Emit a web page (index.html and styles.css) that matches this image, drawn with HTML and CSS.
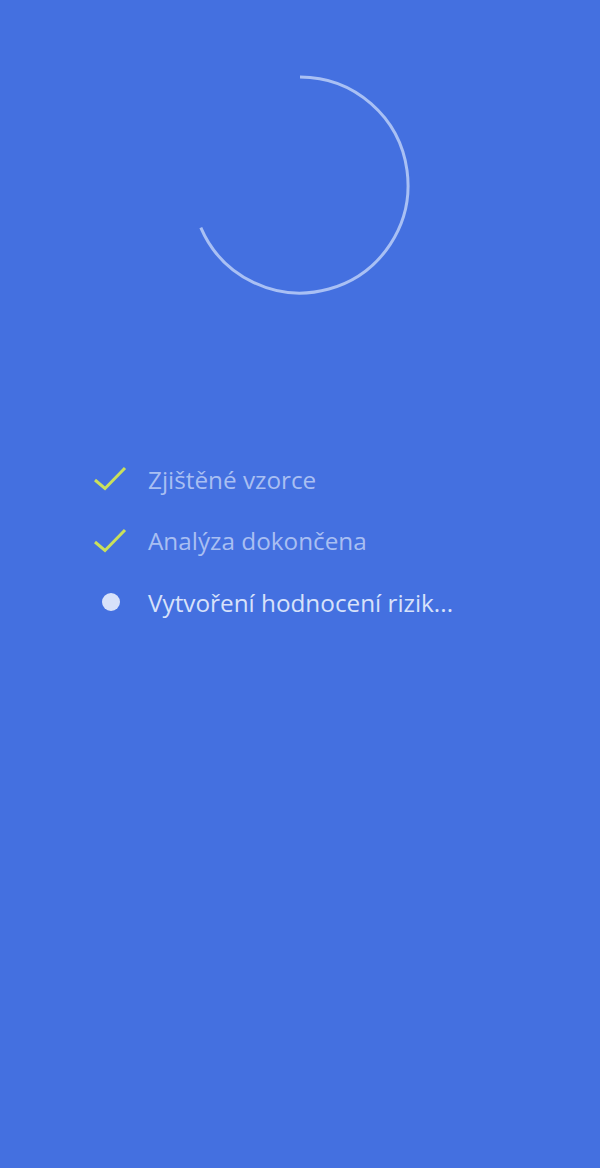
FILE: index.html
```html
<!DOCTYPE html>
<html lang="cs">
<head>
<meta charset="utf-8">
<title>Analýza</title>
<link rel="stylesheet" href="styles.css">
</head>
<body>
<main class="screen">
  <div class="spinner">
    <svg width="220" height="220" viewBox="0 0 220 220">
      <path d="M110 2 A108 108 0 1 1 10.8 152.7" fill="none" stroke="#a9c0f4" stroke-width="3"/>
    </svg>
  </div>
  <ul class="steps">
    <li class="step done">
      <span class="icon"><svg width="34" height="26" viewBox="0 0 34 26"><path d="M2 14 L12 22.5 L32 2" fill="none" stroke="#c9e05c" stroke-width="3"/></svg></span>
      <span class="label">Zjištěné vzorce</span>
    </li>
    <li class="step done">
      <span class="icon"><svg width="34" height="26" viewBox="0 0 34 26"><path d="M2 14 L12 22.5 L32 2" fill="none" stroke="#c9e05c" stroke-width="3"/></svg></span>
      <span class="label">Analýza dokončena</span>
    </li>
    <li class="step current">
      <span class="icon"><span class="dot"></span></span>
      <span class="label">Vytvoření hodnocení rizik...</span>
    </li>
  </ul>
</main>
</body>
</html>
```

FILE: styles.css
```css
html, body {
  margin: 0;
  padding: 0;
  background: #4470e0;
}
.screen {
  width: 600px;
  height: 1168px;
  background: #4470e0;
  font-family: "Open Sans", "Noto Sans", sans-serif;
  display: flex;
  flex-direction: column;
  align-items: center;
}
.spinner {
  margin-top: 75px;
  width: 220px;
  height: 220px;
}
.spinner svg {
  display: block;
}
.steps {
  list-style: none;
  margin: 163px 0 0 0;
  padding: 0 0 0 93px;
  align-self: stretch;
  display: flex;
  flex-direction: column;
  gap: 19.5px;
}
.step {
  display: flex;
  align-items: center;
  height: 42px;
}
.icon {
  width: 55px;
  display: flex;
  align-items: center;
}
.icon svg {
  display: block;
}
.dot {
  width: 18px;
  height: 18px;
  border-radius: 50%;
  background: #d8e2fa;
  margin-left: 9px;
}
.label {
  font-size: 24.3px;
  color: #a9bff2;
}
.current .label {
  color: #d8e2fa;
}
```
